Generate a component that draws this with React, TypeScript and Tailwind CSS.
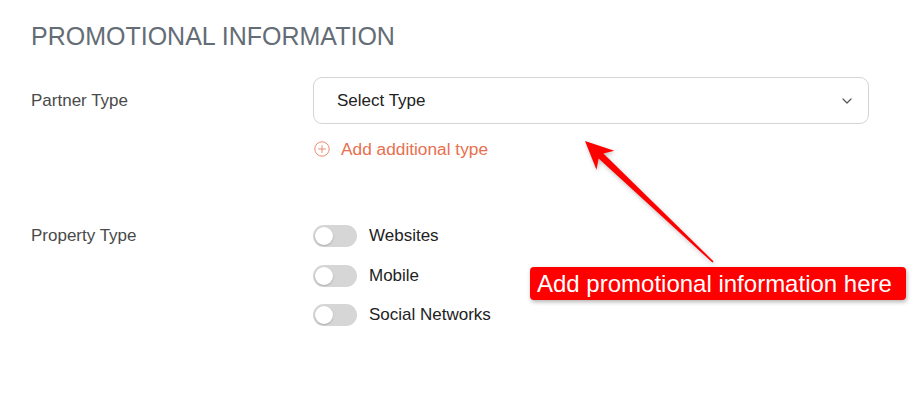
import { ChevronDown } from "lucide-react";

const properties = ["Websites", "Mobile", "Social Networks"];

function Toggle() {
  return (
    <span className="relative inline-flex h-[22px] w-[44px] shrink-0 items-center rounded-full bg-[#d6d6d6]">
      <span className="ml-[2px] h-[18px] w-[18px] rounded-full bg-white shadow-[0_1px_2px_rgba(0,0,0,0.2)]" />
    </span>
  );
}

export default function App() {
  return (
    <div className="relative min-h-[403px] w-full bg-white font-['Liberation_Sans',Arial,sans-serif] text-[17px] text-[#4a4a4a]">
      <div className="pl-[31px] pr-[43px] pt-[24px]">
        <h2 className="text-[25px] leading-none text-[#646c75]">PROMOTIONAL INFORMATION</h2>

        <div className="mt-[28px] grid grid-cols-[282px_1fr]">
          <div className="flex h-[47px] items-center">Partner Type</div>
          <div>
            <button
              type="button"
              className="flex h-[47px] w-full items-center justify-between rounded-[9px] border border-[#d4d4d4] bg-white pl-[23px] pr-[13px] text-[#222]"
            >
              <span>Select Type</span>
              <ChevronDown className="h-[16px] w-[16px] text-[#555]" strokeWidth={1.8} />
            </button>
            <div className="mt-[15px] flex items-center gap-[11px] leading-[20px] text-[#e8704f]">
              <svg width="16" height="16" viewBox="0 0 16 16" className="ml-px">
                <circle cx="8" cy="8" r="7.2" fill="none" stroke="#eb8a6e" strokeWidth="1" />
                <path d="M8 4.2v7.6M4.2 8h7.6" stroke="#eb8a6e" strokeWidth="1" />
              </svg>
              <span className="text-[17.3px]">Add additional type</span>
            </div>
          </div>
        </div>

        <div className="mt-[66px] grid grid-cols-[282px_1fr]">
          <div className="leading-[22px]">Property Type</div>
          <div className="flex flex-col gap-[17.5px]">
            {properties.map((p) => (
              <div key={p} className="flex items-center gap-[12px] leading-[22px] text-[#222]">
                <Toggle />
                <span>{p}</span>
              </div>
            ))}
          </div>
        </div>
      </div>

      <svg className="pointer-events-none absolute left-0 top-0" width="912" height="403">
        <polygon
          points="585,141 614.3,150.7 603.4,153.6 713.6,261.4 712.4,262.6 598.6,158.6 596.5,169.7"
          fill="#ff0000"
          style={{ filter: "drop-shadow(1px 2px 2px rgba(0,0,0,0.25))" }}
        />
      </svg>

      <div className="absolute left-[530px] top-[267px] flex h-[33px] w-[376px] items-center rounded-[4px] bg-[#ff0000] pl-[7px] text-[24px] leading-none text-white shadow-[1px_2px_4px_rgba(0,0,0,0.3)]">
        Add promotional information here
      </div>
    </div>
  );
}
